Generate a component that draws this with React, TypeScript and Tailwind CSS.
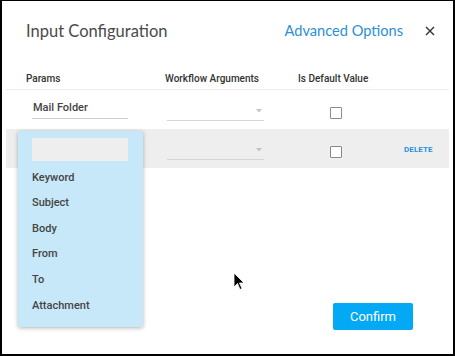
import React from 'react';

const options = ['Keyword', 'Subject', 'Body', 'From', 'To', 'Attachment'];

const Caret = () => (
  <svg width="6" height="4" viewBox="0 0 6 4" className="absolute right-[2px] top-[-11px]">
    <path d="M0 0 L6 0 L3 3.5 Z" fill="#c4c4c4" />
  </svg>
);

const Dropdown = () => (
  <div className="relative w-[97px] h-[1px] bg-[#d6d6d6] mt-[30px]">
    <Caret />
  </div>
);

const Checkbox = () => (
  <div className="w-[12px] h-[12px] mt-[17px] border border-[#8a8a8a] rounded-[1px] bg-white" />
);

export default function App() {
  return (
    <div
      className="relative w-[455px] h-[356px] bg-white border-black border-l-2 border-r-2 border-t border-b-2 flex flex-col overflow-hidden"
      style={{ fontFamily: 'Roboto, "Liberation Sans", sans-serif' }}
    >
      {/* Title bar */}
      <div className="flex items-center h-[59px] pl-[24px] pr-[18px] pt-[1px]">
        <div
          className="text-[16.5px] text-[#4a4a4a] flex-1"
          style={{ fontFamily: 'Lato, "Liberation Sans", sans-serif' }}
        >
          Input Configuration
        </div>
        <div
          className="text-[14.6px] text-[#2b8fd8] mr-[22px]"
          style={{ fontFamily: 'Lato, "Liberation Sans", sans-serif' }}
        >
          Advanced Options
        </div>
        <svg width="10" height="10" viewBox="0 0 10 10">
          <path d="M1 1 L9 9 M9 1 L1 9" stroke="#333" strokeWidth="1.4" />
        </svg>
      </div>

      {/* Table */}
      <div className="mx-[4px]">
        <div className="flex items-end h-[30px] pb-[3px] pl-[20px] border-b border-[#ececec] text-[10px] font-medium text-[#333]">
          <div className="w-[139px]">Params</div>
          <div className="w-[133px]">Workflow Arguments</div>
          <div>Is Default Value</div>
        </div>

        <div className="flex items-start h-[39px] pl-[26px]">
          <div className="w-[135px]">
            <div className="w-[96px] h-[29px] flex items-end border-b border-[#cfcfcf] pb-[2px] text-[11px] font-medium text-[#444] pl-[1px]">
              Mail Folder
            </div>
          </div>
          <div className="w-[163px]">
            <Dropdown />
          </div>
          <Checkbox />
        </div>

        <div className="flex items-start h-[39px] pl-[26px] bg-[#eeeeee]">
          <div className="w-[135px]" />
          <div className="w-[163px]">
            <Dropdown />
          </div>
          <Checkbox />
          <div className="ml-[62px] mt-[15px] text-[8px] font-bold text-[#2b8fd8] tracking-[0.1px]">DELETE</div>
        </div>
      </div>

      <div className="flex-1" />

      {/* Footer */}
      <div className="flex justify-end pr-[40px] pb-[24px]">
        <button className="w-[80px] h-[27px] bg-[#03a9f4] text-white text-[13px] rounded-[2px]">
          Confirm
        </button>
      </div>

      {/* Dropdown menu overlay */}
      <div className="absolute left-[16px] top-[130px] w-[125px] h-[196px] bg-[#c6e8f8] rounded-[2px] shadow-[0_1px_4px_rgba(0,0,0,0.3)] pt-[7px] pl-[14px]">
        <div className="w-[96px] h-[23px] bg-[#eeeeee]" />
        <div className="mt-[4px]">
          {options.map((o) => (
            <div key={o} className="h-[25.6px] flex items-center text-[11px] font-medium text-[#454545]">
              {o}
            </div>
          ))}
        </div>
      </div>

      {/* Mouse cursor */}
      <svg className="absolute left-[231px] top-[271px]" width="14" height="20" viewBox="0 0 14 20">
        <path d="M1 1 L1 15 L4.5 11.5 L7 17.5 L9 16.5 L6.5 11 L11 11 Z" fill="#000" stroke="#fff" strokeWidth="0.8" />
      </svg>
    </div>
  );
}
